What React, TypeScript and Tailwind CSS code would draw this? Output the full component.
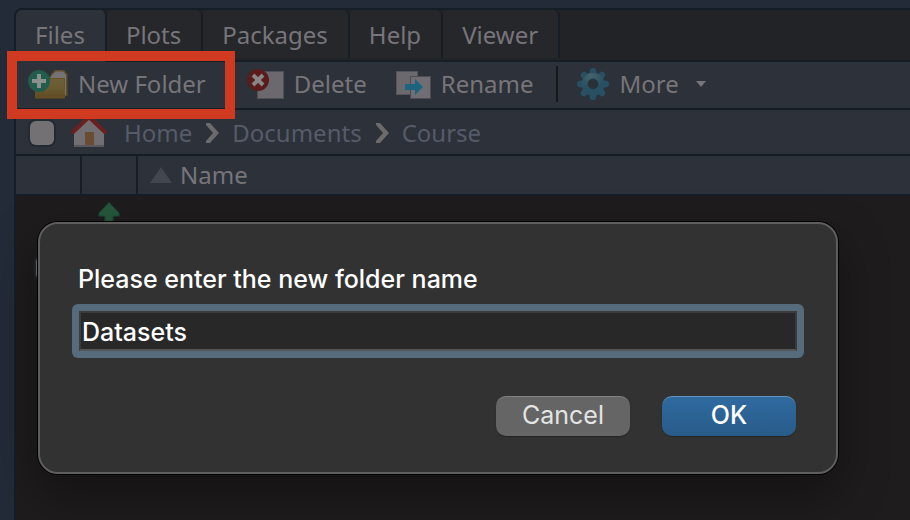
import type { ReactNode } from "react";

const tabs = ["Files", "Plots", "Packages", "Help", "Viewer"];
const crumbs = ["Home", "Documents", "Course"];

function NewFolderIcon() {
  return (
    <svg width="40" height="32" viewBox="0 0 40 32" aria-hidden="true">
      <defs>
        <linearGradient id="folder" x1="0" y1="0" x2="0" y2="1">
          <stop offset="0" stopColor="#6c6039" />
          <stop offset="0.500" stopColor="#6a5a31" />
          <stop offset="1" stopColor="#614b24" />
        </linearGradient>
      </defs>
      <path d="M20 12 L24 5 L27 2 H36 L39.500 6 V28 H20 Z" fill="#5f4f24" />
      <path d="M22 10 L25 6 L28 3.500 H35 L38 7 V27 H36 V10 Z" fill="#747276" />
      <path d="M7.500 14 H20 L23 10.500 H36.500 V30 H7.500 Z" fill="url(#folder)" stroke="#69531f" />
      <circle cx="11" cy="13" r="11" fill="#225c4c" />
      <path d="M9 6 h4 v5 h5 v4 h-5 v5 h-4 v-5 h-5 v-4 h5 Z" fill="#8b8f8d" />
    </svg>
  );
}

function DeleteIcon() {
  return (
    <svg width="38" height="32" viewBox="0 0 38 32" aria-hidden="true">
      <rect x="11.500" y="3.500" width="26" height="27" fill="#6b696d" stroke="#4f5056" />
      <circle cx="12" cy="12" r="11" fill="#591b1c" />
      <path d="M7 7 L17 17 M17 7 L7 17" stroke="#8a8586" strokeWidth="4" />
    </svg>
  );
}

function RenameIcon() {
  return (
    <svg width="36" height="32" viewBox="0 0 36 32" aria-hidden="true">
      <rect x="1.500" y="3.500" width="21" height="23" fill="#6b696d" stroke="#54555b" />
      <rect x="15.500" y="8.500" width="20" height="22" fill="#706e72" stroke="#4b4d54" />
      <path d="M10 16 H20 V11 L28 19 L20 27 V22 H10 Z" fill="#1d6480" />
    </svg>
  );
}

function GearIcon() {
  const teeth = [0, 45, 90, 135, 180, 225, 270, 315];
  return (
    <svg width="34" height="34" viewBox="0 0 34 34" aria-hidden="true">
      <defs>
        <radialGradient id="gear" gradientUnits="userSpaceOnUse" cx="15" cy="8" r="14">
          <stop offset="0" stopColor="#45636b" />
          <stop offset="1" stopColor="#285062" />
        </radialGradient>
      </defs>
      {teeth.map((angle) => (
        <path
          key={angle}
          d="M10 8.500 Q14 7 14 2.500 Q14.500 1 17 1 Q19.500 1 20 2.500 Q20 7 24 8.500 L17 14 Z"
          fill="#285062"
          transform={`rotate(${angle} 17 17)`}
        />
      ))}
      <circle cx="17" cy="17" r="11" fill="url(#gear)" />
      <circle cx="17" cy="17" r="5" fill="#2b3039" stroke="#203a48" />
    </svg>
  );
}

function HomeIcon() {
  return (
    <svg width="38" height="30" viewBox="0 0 38 30" aria-hidden="true">
      <path d="M4 14 L19 1 L34 14 V29 H4 Z" fill="#716f73" />
      <path d="M4 27 H34 V29 H4 Z" fill="#58585d" />
      <rect x="15" y="14" width="9" height="13" fill="#694c32" />
      <path d="M2 15 L19 -1 L36 15" fill="none" stroke="#6b201f" strokeWidth="4" />
    </svg>
  );
}

function ChevronIcon() {
  return (
    <svg width="14" height="20" viewBox="0 0 14 20" aria-hidden="true">
      <path d="M1 0 H5 L14 10 L5 20 H1 V18 L8 10 L1 2 Z" fill="#6c6a6b" />
    </svg>
  );
}

function ToolButton({ icon, children }: { icon: ReactNode; children: ReactNode }) {
  return (
    <button type="button" className="flex shrink-0 items-center gap-2.5">
      {icon}
      <span className="whitespace-nowrap">{children}</span>
    </button>
  );
}

function Box({ label }: { label: string }) {
  return (
    <input
      type="checkbox"
      aria-label={label}
      className="block size-6 shrink-0 appearance-none rounded-md bg-[#737174] shadow-[0_0_0_2px_#222a34]"
    />
  );
}

export default function App() {
  return (
    <div className="relative flex min-h-screen overflow-hidden bg-[#232b38] pt-2 pl-3.5 font-['Noto_Sans','DejaVu_Sans',sans-serif] text-[24px] leading-8 text-[#77757a]">
      <main className="flex min-w-0 flex-1 flex-col rounded-tl-lg border-t-2 border-l-2 border-[#151d27] bg-[#1f1c1d]">
        <div role="tablist" className="flex h-[52px] shrink-0 rounded-tl-md border-b-2 border-[#151d27] bg-[#222327]">
          {tabs.map((tab, i) => (
            <button
              key={tab}
              type="button"
              role="tab"
              aria-selected={i === 0}
              className={
                i === 0
                  ? "h-[52px] rounded-t-md border-r-2 border-[#151d27] bg-[#2d3139] pr-5 pb-0.5 pl-[19px]"
                  : "h-12 rounded-t-md border-r-2 border-[#151d27] bg-[#26272b] pt-0.5 pr-5 pl-[19px]"
              }
            >
              {tab}
            </button>
          ))}
        </div>

        <div className="flex h-12 shrink-0 items-center border-b-2 border-[#151d27] bg-[#2d3139] pb-0.5 pl-3">
          <div className="flex items-center gap-10">
            <ToolButton icon={<NewFolderIcon />}>New Folder</ToolButton>
            <ToolButton icon={<DeleteIcon />}>Delete</ToolButton>
          </div>
          <div className="ml-7 flex items-center gap-[18px]">
            <ToolButton icon={<RenameIcon />}>Rename</ToolButton>
            <span className="ml-1 h-9 w-0.5 bg-[#16171b]" />
            <ToolButton icon={<GearIcon />}>
              <span className="flex items-center gap-4">
                More
                <svg width="12" height="8" viewBox="0 0 12 8" aria-hidden="true">
                  <path d="M1 1 H11 L6 7 Z" fill="#77757a" />
                </svg>
              </span>
            </ToolButton>
          </div>
        </div>

        <nav className="flex h-[46px] shrink-0 items-center border-b-2 border-[#151d27] bg-[#2d3139] pt-0.5 pl-3.5 text-[#575b69]">
          <Box label="Select all files" />
          <span className="mr-4 ml-4">
            <HomeIcon />
          </span>
          <ol className="flex items-center gap-[13px]">
            {crumbs.map((crumb, i) => (
              <li key={crumb} className="flex items-center gap-[13px]">
                {i > 0 && <ChevronIcon />}
                <a href="#">{crumb}</a>
              </li>
            ))}
          </ol>
        </nav>

        <table className="w-full table-fixed border-separate border-spacing-0 text-left">
          <colgroup>
            <col className="w-[66px]" />
            <col className="w-14" />
            <col />
          </colgroup>
          <thead>
            <tr className="h-10 bg-[#2c313a]">
              <th className="border-r-2 border-b-2 border-[#151d27] p-0" />
              <th className="border-r-2 border-b-2 border-[#151d27] p-0" />
              <th className="border-b-2 border-[#151d27] p-0 pl-3 font-normal">
                <span className="flex items-center gap-2">
                  <svg width="22" height="16" viewBox="0 0 22 16" aria-hidden="true">
                    <path d="M0 16 L11 0 L22 16 Z" fill="#42464e" />
                  </svg>
                  Name
                </span>
              </th>
            </tr>
          </thead>
          <tbody>
            <tr className="h-11">
              <td />
              <td className="p-0 pr-0.5">
                <svg className="mx-auto" width="22" height="34" viewBox="0 0 22 34" aria-hidden="true">
                  <path d="M11 1.500 L21 12 V15 H15 V32 H7 V15 H1 V12 Z" fill="#25583d" stroke="#1f4a35" />
                </svg>
              </td>
              <td />
            </tr>
            <tr className="h-14">
              <td className="p-0 pl-5">
                <Box label="Select file" />
              </td>
              <td />
              <td />
            </tr>
          </tbody>
        </table>
      </main>

      <div className="pointer-events-none absolute top-[51px] left-[7px] h-[68px] w-[228px] border-10 border-[#d03a20]" />

      <form
        role="dialog"
        aria-modal="true"
        className="absolute top-[222px] right-[72px] left-[38px] rounded-[20px] border-2 border-[#5e5e5e] bg-[#323232] px-8 pt-[39px] pb-9 font-[Inter,'Liberation_Sans',sans-serif] shadow-[0_0_0_1px_#000,0_20px_50px_rgba(0,0,0,0.4)]"
      >
        <label htmlFor="folder-name" className="block px-1.5 text-[25px] leading-8 font-medium text-white">
          Please enter the new folder name
        </label>
        <div className="mt-[9px] rounded-md bg-[#566b7c] p-[7px]">
          <input
            id="folder-name"
            type="text"
            defaultValue="Datasets"
            className="block h-10 w-full border-2 border-[#3b3b3b] border-b-[#555555] bg-[#282828] px-px pt-0.5 text-[25px] font-medium text-white outline-none"
          />
        </div>
        <div className="mt-[38px] flex justify-end gap-8 pr-2 text-[25px]">
          <button
            type="button"
            className="h-10 w-[134px] rounded-[10px] border-t border-[#828282] bg-[#656565] pb-1 text-[#e4e4e4] shadow-[0_1px_1px_rgba(0,0,0,0.3)]"
          >
            Cancel
          </button>
          <button
            type="submit"
            className="h-10 w-[134px] rounded-[10px] border-t border-[#6394bd] bg-linear-to-b from-[#2f6a9f] to-[#285b8a] pb-1 font-medium text-white shadow-[0_1px_1px_rgba(0,0,0,0.3)]"
          >
            OK
          </button>
        </div>
      </form>
    </div>
  );
}
